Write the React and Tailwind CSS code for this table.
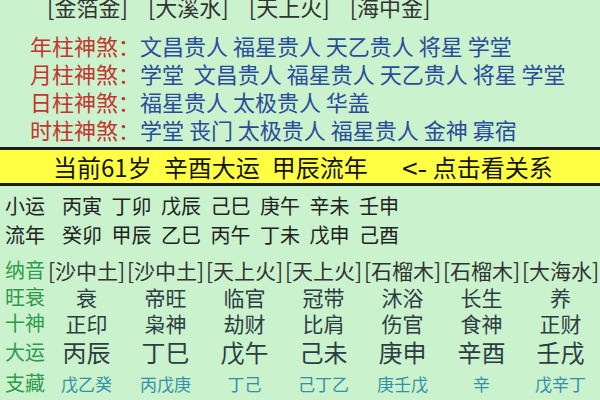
export default function App() {
  const font = { fontFamily: '"Noto Sans CJK SC", "Noto Sans", sans-serif' };
  const shensha = [
    ["年柱神煞", ["文昌贵人", "福星贵人", "天乙贵人", "将星", "学堂"]],
    ["月柱神煞", ["学堂\u00a0", "文昌贵人", "福星贵人", "天乙贵人", "将星", "学堂"]],
    ["日柱神煞", ["福星贵人", "太极贵人", "华盖"]],
    ["时柱神煞", ["学堂", "丧门", "太极贵人", "福星贵人", "金神", "寡宿"]],
  ];
  const xiaoyun = ["丙寅", "丁卯", "戊辰", "己巳", "庚午", "辛未", "壬申"];
  const liunian = ["癸卯", "甲辰", "乙巳", "丙午", "丁未", "戊申", "己酉"];
  const nayin = ["[沙中土]", "[沙中土]", "[天上火]", "[天上火]", "[石榴木]", "[石榴木]", "[大海水]"];
  const wangshuai = ["衰", "帝旺", "临官", "冠带", "沐浴", "长生", "养"];
  const shishen = ["正印", "枭神", "劫财", "比肩", "伤官", "食神", "正财"];
  const dayun = ["丙辰", "丁巳", "戊午", "己未", "庚申", "辛酉", "壬戌"];
  const zhicang = ["戊乙癸", "丙戊庚", "丁己", "己丁乙", "庚壬戊", "辛", "戊辛丁"];

  return (
    <div className="w-[600px] h-[400px] overflow-hidden bg-[#c9f2cd]" style={font}>
      {/* top nayin row (cut off) */}
      <div className="-mt-[8px] h-[28px] flex items-center pl-[47px] gap-[20px] text-[22px] leading-none text-[#333] whitespace-nowrap">
        <span>[金箔金]</span>
        <span>[大溪水]</span>
        <span>[天上火]</span>
        <span>[海中金]</span>
      </div>

      {/* shensha rows */}
      <div className="mt-[11px] flex flex-col">
        {shensha.map(([label, vals]) => (
          <div key={label} className="h-[28px] flex items-center pl-[30px] text-[22px] leading-none whitespace-nowrap">
            <span className="text-[#c4352e]">{label}</span>
            <span className="text-[#c4352e] w-[22px]">：</span>
            <span className="text-[#2a4c9c] whitespace-pre">{vals.join(" ")}</span>
          </div>
        ))}
      </div>

      {/* banner */}
      <div className="mt-[4px] h-[39px] border-y-[3px] border-[#1c1c1c] bg-[#ffff44] flex items-center pl-[53px] text-[24px] leading-none text-[#151515] whitespace-nowrap">
        <span>当前61岁</span>
        <span className="ml-[12px]">辛酉大运</span>
        <span className="ml-[12px]">甲辰流年</span>
        <span className="ml-[29px] w-[36px] flex justify-center text-[28px] leading-none">&lt;-</span>
        <span>点击看关系</span>
      </div>

      {/* xiaoyun / liunian */}
      <div className="mt-[5px] flex flex-col text-[20px] leading-none text-[#222]">
        {[["小运", xiaoyun], ["流年", liunian]].map(([label, vals]) => (
          <div key={label} className="h-[29px] flex items-center pl-[5px] whitespace-nowrap">
            <span className="w-[57px]">{label}</span>
            <div className="flex gap-[9.5px]">
              {vals.map((v, i) => (
                <span key={i}>{v}</span>
              ))}
            </div>
          </div>
        ))}
      </div>

      {/* pillar grid */}
      <div className="mt-[7px] grid grid-cols-[47px_repeat(7,minmax(0,1fr))] items-center whitespace-nowrap">
        <div className="h-[28px] flex items-center pl-[5px] text-[20px] leading-none text-[#2f9a4c]">纳音</div>
        {nayin.map((v, i) => (
          <div key={i} className="h-[28px] flex items-center justify-center text-[21px] leading-none text-[#333]">{v}</div>
        ))}

        <div className="h-[26px] flex items-center pl-[5px] text-[20px] leading-none text-[#2f9a4c]">旺衰</div>
        {wangshuai.map((v, i) => (
          <div key={i} className="h-[26px] flex items-center justify-center text-[21px] leading-none text-[#2e3d44]">{v}</div>
        ))}

        <div className="h-[26px] flex items-center pl-[5px] text-[20px] leading-none text-[#2f9a4c]">十神</div>
        {shishen.map((v, i) => (
          <div key={i} className="h-[26px] flex items-center justify-center text-[21px] leading-none text-[#2e3d44]">{v}</div>
        ))}

        <div className="h-[32px] flex items-center pl-[5px] text-[20px] leading-none text-[#2f9a4c]">大运</div>
        {dayun.map((v, i) => (
          <div key={i} className="h-[32px] flex items-center justify-center text-[24px] leading-none text-[#2e3d44]">{v}</div>
        ))}

        <div className="h-[30px] flex items-center pl-[5px] text-[20px] leading-none text-[#2f9a4c]">支藏</div>
        {zhicang.map((v, i) => (
          <div key={i} className="h-[30px] flex items-center justify-center text-[17px] leading-none text-[#3390a8]">{v}</div>
        ))}
      </div>
    </div>
  );
}
